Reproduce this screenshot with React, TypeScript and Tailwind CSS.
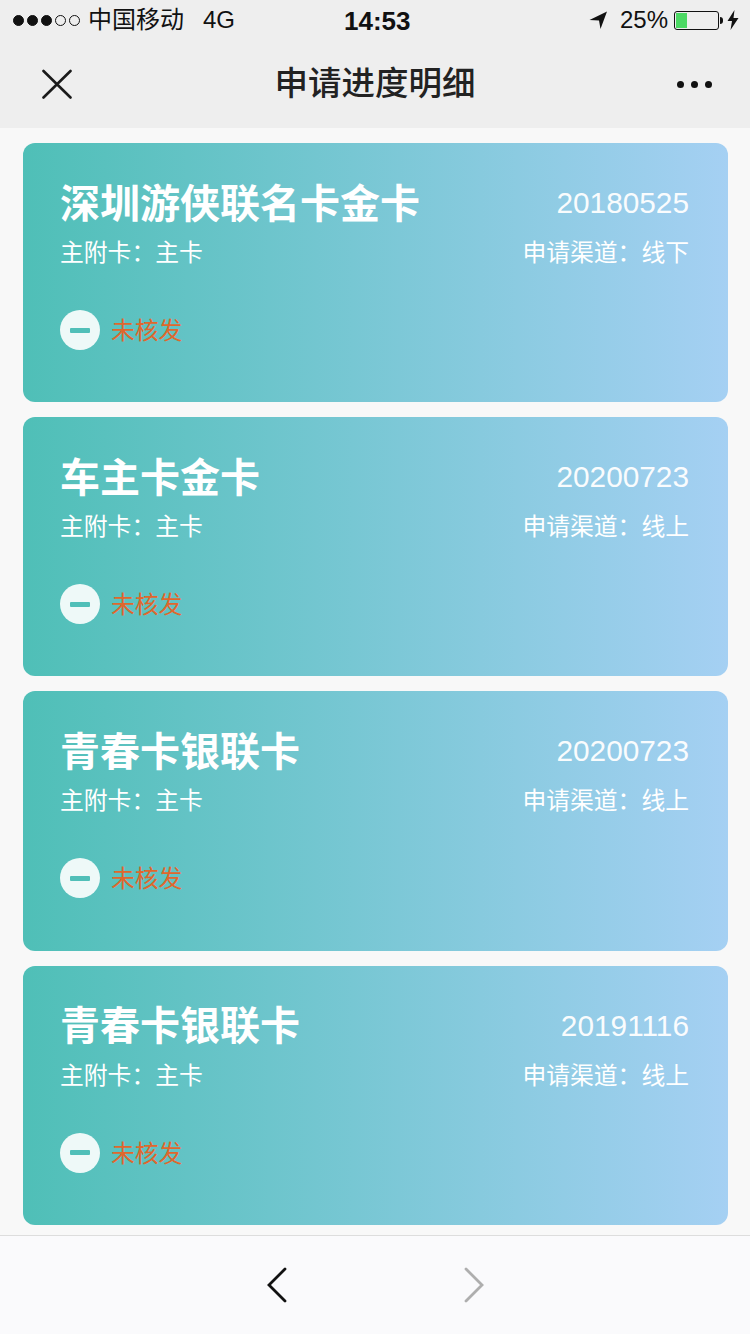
const font = { fontFamily: '"Liberation Sans", "Noto Sans CJK SC", sans-serif' };

const cards = [
  { name: "深圳游侠联名卡金卡", date: "20180525", channel: "线下" },
  { name: "车主卡金卡", date: "20200723", channel: "线上" },
  { name: "青春卡银联卡", date: "20200723", channel: "线上" },
  { name: "青春卡银联卡", date: "20191116", channel: "线上" },
];

function StatusBar() {
  return (
    <div className="relative flex h-[40px] items-center justify-between pl-[13px] pr-[11px] text-[24px] leading-none text-[#111]">
      <div className="flex items-center">
        <div className="flex gap-[3px]">
          {[0, 1, 2, 3, 4].map((i) => (
            <span
              key={i}
              className={
                i < 3
                  ? "h-[11px] w-[11px] rounded-full border border-[#111] bg-[#111]"
                  : "h-[11px] w-[11px] rounded-full border border-[#111]"
              }
            />
          ))}
        </div>
        <span className="ml-[8px]">中国移动</span>
        <span className="ml-[19px]">4G</span>
      </div>
      <span className="absolute left-[344px] top-[8px] text-[26px] font-bold leading-none">14:53</span>
      <div className="flex items-center">
        <svg width="18" height="18" viewBox="0 0 18 18" className="mr-[13px]">
          <path d="M0.5 9 L18 0.5 L11.5 18 L10 9.5 Z" fill="#111" />
        </svg>
        <span>25%</span>
        <div className="relative ml-[6px] h-[19px] w-[45px] rounded-[3px] border border-[#111] p-[1px]">
          <div className="h-full w-[11px] bg-[#4cd964]" />
          <span className="absolute right-[-5px] top-[5px] h-[7px] w-[3px] rounded-r-full bg-[#111]" />
        </div>
        <svg width="12" height="20" viewBox="0 0 12 20" className="ml-[8px]">
          <path d="M7.5 0 L0.5 11 H5 L3.5 20 L11.5 8 H6.5 Z" fill="#111" />
        </svg>
      </div>
    </div>
  );
}

function NavBar() {
  return (
    <div className="flex h-[88px] items-center justify-between pl-[42px] pr-[38px]">
      <svg width="30" height="30" viewBox="0 0 30 30">
        <path d="M1.5 2 L28.5 28.5 M28.5 2 L1.5 28.5" stroke="#1a1a1a" strokeWidth="2.6" strokeLinecap="round" />
      </svg>
      <h1 className="absolute left-0 right-0 mt-[1px] text-center text-[33.5px] font-medium text-[#222]">申请进度明细</h1>
      <div className="flex gap-[7px]">
        <span className="h-[7px] w-[7px] rounded-full bg-[#111]" />
        <span className="h-[7px] w-[7px] rounded-full bg-[#111]" />
        <span className="h-[7px] w-[7px] rounded-full bg-[#111]" />
      </div>
    </div>
  );
}

function Card({ name, date, channel }: { name: string; date: string; channel: string }) {
  return (
    <div className="flex h-[259.2px] flex-col rounded-[12px] bg-linear-to-r/srgb from-[#4fbfb7] to-[#a5d0f3] pl-[37px] pr-[39px] pt-[35px] text-white">
      <div className="flex h-[50px] items-center justify-between">
        <span className="pt-[1px] text-[40px] font-bold leading-none">{name}</span>
        <span className="text-[29.8px] leading-none opacity-95">{date}</span>
      </div>
      <div className="mt-[2px] flex h-[46px] items-center justify-between text-[23.8px] leading-none">
        <span>主附卡：主卡</span>
        <span>申请渠道：{channel}</span>
      </div>
      <div className="mt-[34px] flex items-center">
        <span className="flex h-[40px] w-[40px] items-center justify-center rounded-full bg-[#eef9f8]">
          <span className="h-[5px] w-[20px] rounded-[1px] bg-[#50bfb8]" />
        </span>
        <span className="ml-[10px] pl-[1px] pt-[2px] text-[23.8px] leading-none text-[#e0672c]">未核发</span>
      </div>
    </div>
  );
}

export default function App() {
  return (
    <div className="flex h-[1334px] w-[750px] flex-col overflow-hidden bg-[#f8f8f8]" style={font}>
      <header className="relative h-[128px] bg-[#eeeeee]">
        <StatusBar />
        <NavBar />
      </header>
      <main className="flex flex-1 flex-col gap-[15px] pl-[23px] pr-[22px] pt-[15px]">
        {cards.map((c, i) => (
          <Card key={i} {...c} />
        ))}
      </main>
      <footer className="flex h-[99px] items-center border-t border-[#dddddd] bg-[#fafafc] pl-[267px]">
        <svg width="20" height="36" viewBox="0 0 20 36">
          <path d="M18 2 L2 18 L18 34" fill="none" stroke="#111" strokeWidth="2.8" strokeLinecap="round" />
        </svg>
        <svg width="20" height="36" viewBox="0 0 20 36" className="ml-[177px]">
          <path d="M2 2 L18 18 L2 34" fill="none" stroke="#aeaeae" strokeWidth="2.8" strokeLinecap="round" />
        </svg>
      </footer>
    </div>
  );
}
